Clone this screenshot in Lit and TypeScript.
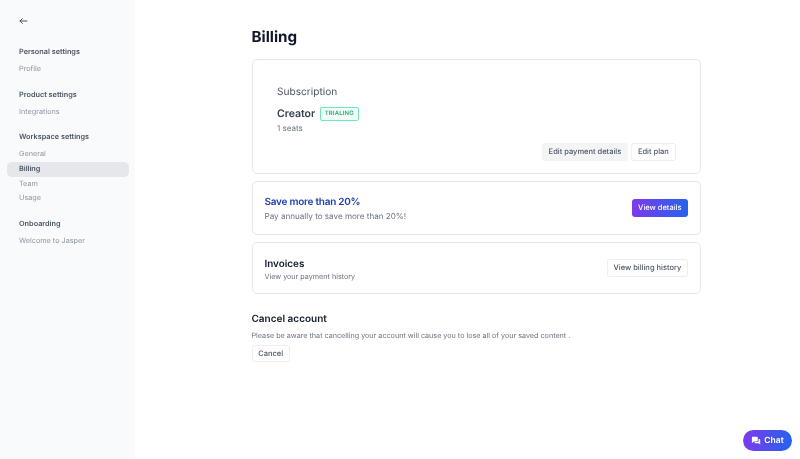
import { LitElement, html, css } from "lit";
import { customElement } from "lit/decorators.js";

@customElement("app-root")
export class AppRoot extends LitElement {
  static styles = css`
    :host { display: block; height: 459px; overflow: hidden; font-family: Inter, "Liberation Sans", sans-serif; background: #fff; color: #111827; position: relative; text-rendering: geometricPrecision; }
    * { box-sizing: border-box; }
    .page { display: flex; height: 459px; will-change: transform; }
    .side { width: 135px; flex: none; background: #f9fafb; padding: 15px 6.5px 0; }
    .back { display: block; margin: 0 0 0 12.5px; height: 12px; }
    .group { margin-top: 12px; }
    .group.first { margin-top: 19.2px; }
    .head { font-size: 7.3px; line-height: 11px; font-weight: 600; color: #4b5563; padding-left: 12.5px; margin-bottom: 5px; }
    .item { font-size: 7.25px; line-height: 14.6px; height: 14.6px; color: #8f96a3; padding-left: 12.5px; border-radius: 5px; }
    .item.on { background: #e5e7eb; color: #4b5563; font-weight: 600; }
    .main { flex: 1; padding: 27.5px 99px 0 116.5px; min-width: 0; }
    h1 { margin: 0 0 13px; font-size: 15.2px; line-height: 18px; font-weight: 700; color: #111827; }
    .card { border: 1px solid #e5e7eb; border-radius: 5px; background: #fff; }
    .sub { height: 115.5px; padding: 25px 24.5px 0; }
    .sub h2 { margin: 0; font-size: 10.15px; line-height: 14px; font-weight: 400; color: #4b5563; }
    .plan { display: flex; align-items: center; gap: 4.5px; margin-top: 8.2px; }
    .plan b { font-size: 10.5px; line-height: 14px; font-weight: 600; color: #374151; }
    .badge { border: 1px solid #6ee7b7; background: #f0fdf8; color: #2fa876; border-radius: 2px; font-size: 6px; font-weight: 600; line-height: 12px; height: 14px; padding: 0 4px; letter-spacing: 0.15px; }
    .seats { font-size: 8px; line-height: 12px; color: #6b7280; margin-top: 1.8px; }
    .actions { display: flex; justify-content: flex-end; gap: 3.5px; margin-top: 8.5px; }
    .btn { font: 500 7.5px/1 Inter, "Liberation Sans", sans-serif; height: 18px; border-radius: 3px; border: 1px solid #eceef1; background: #fff; color: #4b5563; padding: 0 5.7px; display: flex; align-items: center; white-space: nowrap; }
    .btn.grey { background: #f3f4f6; border-color: #f3f4f6; padding: 0 5.5px; }
    .btn.grad { background: linear-gradient(90deg, #7c3aed, #2563eb); border: none; color: #fff; padding: 0 6.5px; }
    .row { display: flex; align-items: center; justify-content: space-between; padding: 0 12px; margin-top: 7px; }
    .save { height: 54px; }
    .save h3 { margin: 0; font-size: 10px; line-height: 14px; font-weight: 600; color: #1e40af; letter-spacing: -0.25px; }
    .save p { margin: 1px 0 0; font-size: 8.1px; line-height: 12px; color: #6b7280; }
    .inv { height: 52px; }
    .inv h3 { margin: 2.5px 0 0; font-size: 9.9px; line-height: 14px; font-weight: 600; color: #111827; }
    .inv p { margin: -0.5px 0 0; font-size: 7.2px; line-height: 11px; color: #6b7280; }
    .cancel { margin-top: 17.5px; }
    .cancel h3 { margin: 0; font-size: 10px; line-height: 14px; font-weight: 600; color: #111827; }
    .cancel p { margin: 4.5px 0 4px; font-size: 7.2px; line-height: 11px; color: #6b7280; white-space: nowrap; }
    .cancel .btn { width: fit-content; height: 17px; }
    .chat { position: absolute; right: 8px; bottom: 8px; width: 49px; height: 21px; border-radius: 11px; background: linear-gradient(90deg, #7c3aed, #2563eb); color: #fff; display: flex; align-items: center; justify-content: center; gap: 3px; font-size: 8.5px; font-weight: 600; will-change: transform; }
  `;

  private item(label: string, on = false) {
    return html`<div class="item ${on ? "on" : ""}">${label}</div>`;
  }

  render() {
    return html`
      <div class="page">
        <aside class="side">
          <svg class="back" width="10" height="12" viewBox="0 0 10 12" fill="none" stroke="#4b5563" stroke-width="1" stroke-linecap="round" stroke-linejoin="round">
            <path d="M1 6h7M3.4 3.6 1 6l2.4 2.4"/>
          </svg>
          <div class="group first"><div class="head">Personal settings</div>${this.item("Profile")}</div>
          <div class="group"><div class="head">Product settings</div>${this.item("Integrations")}</div>
          <div class="group"><div class="head">Workspace settings</div>
            ${this.item("General")}${this.item("Billing", true)}${this.item("Team")}${this.item("Usage")}
          </div>
          <div class="group"><div class="head">Onboarding</div>${this.item("Welcome to Jasper")}</div>
        </aside>
        <main class="main">
          <h1>Billing</h1>
          <section class="card sub">
            <h2>Subscription</h2>
            <div class="plan"><b>Creator</b><span class="badge">TRIALING</span></div>
            <div class="seats">1 seats</div>
            <div class="actions"><div class="btn grey">Edit payment details</div><div class="btn">Edit plan</div></div>
          </section>
          <section class="card row save">
            <div><h3>Save more than 20%</h3><p>Pay annually to save more than 20%!</p></div>
            <div class="btn grad">View details</div>
          </section>
          <section class="card row inv">
            <div><h3>Invoices</h3><p>View your payment history</p></div>
            <div class="btn">View billing history</div>
          </section>
          <section class="cancel">
            <h3>Cancel account</h3>
            <p>Please be aware that cancelling your account will cause you to lose all of your saved content .</p>
            <div class="btn">Cancel</div>
          </section>
        </main>
      </div>
      <div class="chat">
        <svg width="10" height="10" viewBox="0 0 10 10" fill="#fff"><path d="M1.2 0.8h4.6a1 1 0 0 1 1 1v2.6a1 1 0 0 1-1 1H3L1.4 6.8A.3.3 0 0 1 .9 6.6V1.8a1 1 0 0 1 .3-1z"/><path d="M7.6 3h.6a1 1 0 0 1 1 1v4.4l-1.5-1.2H4.4a1 1 0 0 1-.8-1.1h2.6a1.4 1.4 0 0 0 1.4-1.4z"/></svg>
        <span>Chat</span>
      </div>
    `;
  }
}
